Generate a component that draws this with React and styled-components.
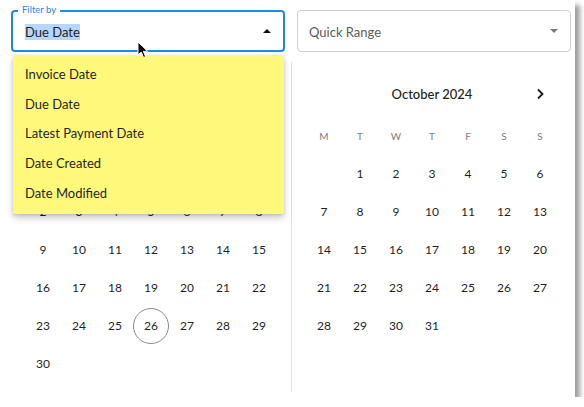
import React from "react";
import styled, { createGlobalStyle } from "styled-components";

const GlobalStyle = createGlobalStyle`
  html, body { margin: 0; padding: 0; background: #ffffff; }
  body { font-family: "Lato", "Noto Sans", sans-serif; color: #222; }
  * { box-sizing: border-box; }
`;

const BLUE = "#1e88e5";

const Panel = styled.div`
  position: relative;
  width: 575px;
  height: 397px;
  background: #fff;
  box-shadow: 5px 5px 5px rgba(0, 0, 0, 0.38);
  display: flex;
  flex-direction: column;
`;

const TopRow = styled.div`
  display: flex;
  gap: 12px;
  padding: 10px 3px 0 11px;
`;

const SelectBox = styled.div`
  position: relative;
  width: 274px;
  height: 42px;
  display: flex;
  align-items: center;
  justify-content: space-between;
  border-radius: 4px;
  border: ${(p) => (p.$focused ? `2px solid ${BLUE}` : "1px solid #cfcfcf")};
  padding: ${(p) => (p.$focused ? "2px 12px 0 12px" : "2px 12px 0 11px")};
  font-size: 13px;
  color: ${(p) => (p.$focused ? "#1d1d1d" : "#5a5a5a")};
`;

const Legend = styled.span`
  position: absolute;
  top: -8px;
  left: 5px;
  padding: 0 4px;
  background: #fff;
  font-size: 9.5px;
  line-height: 12px;
  color: ${BLUE};
`;

const Selected = styled.span`
  background: #b6d6fc;
  line-height: 16px;
`;

const Caret = styled.span`
  width: 0;
  height: 0;
  margin-top: -2px;
  border-left: 4.5px solid transparent;
  border-right: 4.5px solid transparent;
  ${(p) =>
    p.$up
      ? `border-bottom: 4.5px solid #111;`
      : `border-top: 4.5px solid #7a7a7a;`}
`;

const Body = styled.div`
  flex: 1;
  display: flex;
  padding: 10px 0 5px;
`;

const Pane = styled.div`
  width: ${(p) => p.$width}px;
  padding: 14px 0 0 ${(p) => p.$padLeft}px;
`;

const Divider = styled.div`
  width: 1px;
  background: #e2e2e2;
`;

const Header = styled.div`
  width: 252px;
  height: 36px;
  display: grid;
  grid-template-columns: 36px 1fr 36px;
  align-items: center;
  margin-bottom: 5.5px;
`;

const Title = styled.div`
  text-align: center;
  font-size: 13px;
  font-weight: 500;
  color: #222;
`;

const NavBtn = styled.div`
  display: flex;
  align-items: center;
  justify-content: center;
  height: 36px;
`;

const Grid = styled.div`
  display: grid;
  grid-template-columns: repeat(7, 36px);
  grid-auto-rows: 36px;
  row-gap: 2px;
`;

const WeekDay = styled.div`
  display: flex;
  align-items: center;
  justify-content: center;
  font-size: 10px;
  color: #7d7d7d;
`;

const Day = styled.div`
  display: flex;
  align-items: center;
  justify-content: center;
  font-size: 12px;
  color: #1f1f1f;
  border-radius: 50%;
  border: ${(p) => (p.$today ? "1px solid #8a8a8a" : "1px solid transparent")};
`;

const Menu = styled.div`
  position: absolute;
  z-index: 2;
  left: 13px;
  top: 55px;
  width: 271px;
  padding: 4px 0 6px;
  background: #fff97b;
  box-shadow: 0 4px 7px rgba(0, 0, 0, 0.2), 0 1px 3px rgba(0, 0, 0, 0.12);
  border-radius: 2px;
`;

const MenuItem = styled.div`
  height: 29.8px;
  display: flex;
  align-items: center;
  padding-left: 12px;
  font-size: 13px;
  color: #1f1f1f;
`;

const Cursor = styled.svg`
  position: absolute;
  z-index: 3;
  left: 137px;
  top: 41px;
`;

const WEEK = ["M", "T", "W", "T", "F", "S", "S"];

function Chevron({ dir }) {
  return (
    <svg width="10" height="12" viewBox="0 0 10 12">
      <path
        d={dir === "right" ? "M3 1.5 L7.5 6 L3 10.5" : "M7 1.5 L2.5 6 L7 10.5"}
        fill="none"
        stroke="#1a1a1a"
        strokeWidth="1.8"
      />
    </svg>
  );
}

function Calendar({ title, offset, days, today, prev, next }) {
  const cells = [];
  for (let i = 0; i < offset; i++) cells.push(<div key={"e" + i} />);
  for (let d = 1; d <= days; d++)
    cells.push(
      <Day key={d} $today={d === today}>
        {d}
      </Day>
    );
  return (
    <>
      <Header>
        <NavBtn>{prev && <Chevron dir="left" />}</NavBtn>
        <Title>{title}</Title>
        <NavBtn>{next && <Chevron dir="right" />}</NavBtn>
      </Header>
      <Grid>
        {WEEK.map((w, i) => (
          <WeekDay key={i}>{w}</WeekDay>
        ))}
        {cells}
      </Grid>
    </>
  );
}

export default function App() {
  return (
    <>
      <GlobalStyle />
      <Panel>
        <TopRow>
          <SelectBox $focused>
            <Legend>Filter by</Legend>
            <Selected>Due Date</Selected>
            <Caret $up />
          </SelectBox>
          <SelectBox>
            <span>Quick Range</span>
            <Caret />
          </SelectBox>
        </TopRow>
        <Body>
          <Pane $width={291} $padLeft={25}>
            <Calendar title="September 2024" offset={6} days={30} today={26} prev />
          </Pane>
          <Divider />
          <Pane $width={283} $padLeft={14}>
            <Calendar title="October 2024" offset={1} days={31} next />
          </Pane>
        </Body>
        <Menu>
          {["Invoice Date", "Due Date", "Latest Payment Date", "Date Created", "Date Modified"].map(
            (t) => (
              <MenuItem key={t}>{t}</MenuItem>
            )
          )}
        </Menu>
        <Cursor width="12" height="18" viewBox="0 0 12 18">
          <path
            d="M1 1 L1 14 L4.2 11 L6.6 16.5 L8.6 15.6 L6.3 10.3 L10.6 10.3 Z"
            fill="#000"
            stroke="#fff"
            strokeWidth="1"
          />
        </Cursor>
      </Panel>
    </>
  );
}
